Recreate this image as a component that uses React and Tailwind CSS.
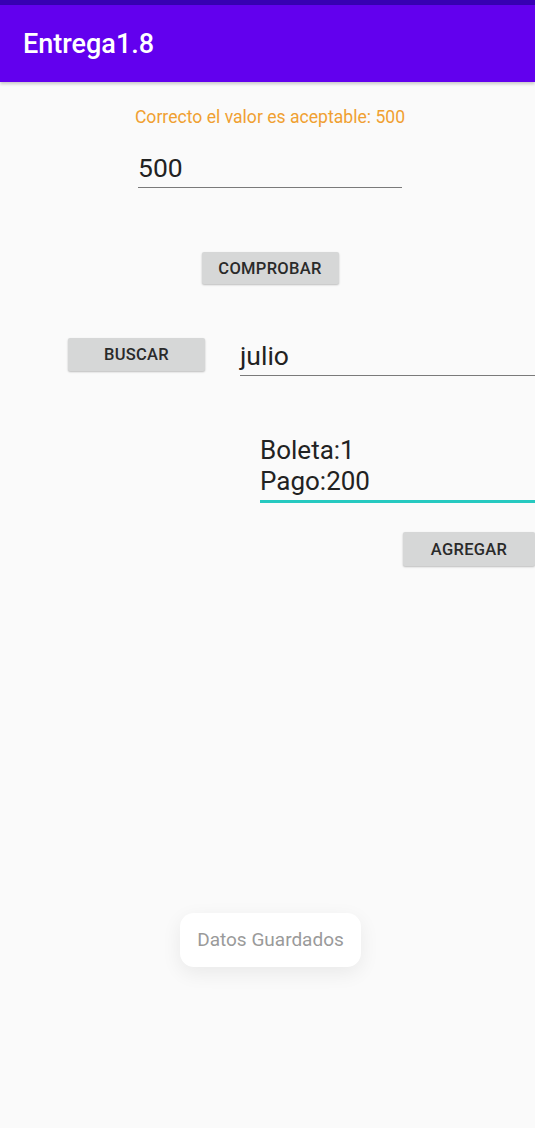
import React from "react";

const F = { fontFamily: "Roboto, 'Noto Sans', sans-serif" };

function Btn({ children, className = "" }) {
  return (
    <div
      className={`flex items-center justify-center bg-[#d6d7d7] text-[#2a2a2a] text-[16.5px] font-medium tracking-[0.3px] rounded-[2px] shadow-[0_1px_2px_rgba(0,0,0,0.25)] ${className}`}
    >
      <span className="mt-[2px]">{children}</span>
    </div>
  );
}

export default function App() {
  return (
    <div className="w-[535px] h-[1128px] bg-[#fafafa] flex flex-col overflow-hidden" style={F}>
      <div className="h-[5px] bg-[#3700b3]" />
      <div className="h-[77px] bg-[#6200ee] flex items-center pl-[23px] shadow-[0_2px_3px_rgba(0,0,0,0.2)]">
        <span className="text-white text-[27px] font-medium leading-none mt-[2px]">Entrega1.8</span>
      </div>

      <div className="flex justify-center mt-[24px] pl-[5px]">
        <span className="text-[#f0a031] text-[17.6px] leading-[22px]">Correcto el valor es aceptable: 500</span>
      </div>

      <div className="ml-[138px] w-[264px] mt-[24px] border-b-[1.5px] border-[#7a7a7a] pb-[3px]">
        <span className="text-[#222] text-[26.5px] leading-[32px]">500</span>
      </div>

      <div className="flex justify-center mt-[64px] pl-[5px]">
        <Btn className="w-[137px] h-[32px]">COMPROBAR</Btn>
      </div>

      <div className="flex items-start mt-[54px]">
        <Btn className="ml-[68px] w-[137px] h-[33px]">BUSCAR</Btn>
        <div className="ml-[35px] flex-1 border-b-[1.5px] border-[#7a7a7a] pb-[3px] mt-[2px]">
          <span className="text-[#222] text-[26.5px] leading-[32px]">julio</span>
        </div>
      </div>

      <div className="ml-[260px] mt-[59px] border-b-[3px] border-[#26c9c0] pb-[3px]">
        <div className="text-[#222] text-[26px] leading-[31px]">Boleta:1</div>
        <div className="text-[#222] text-[26px] leading-[31px]">Pago:200</div>
      </div>

      <div className="flex justify-end mt-[29px]">
        <Btn className="w-[132px] h-[34px]">AGREGAR</Btn>
      </div>

      <div className="flex justify-center mt-[347px] pl-[6px]">
        <div className="w-[181px] h-[54px] bg-white rounded-[14px] shadow-[0_6px_20px_rgba(0,0,0,0.07)] flex items-center justify-center">
          <span className="text-[#9a9a9a] text-[19px]">Datos Guardados</span>
        </div>
      </div>
    </div>
  );
}
